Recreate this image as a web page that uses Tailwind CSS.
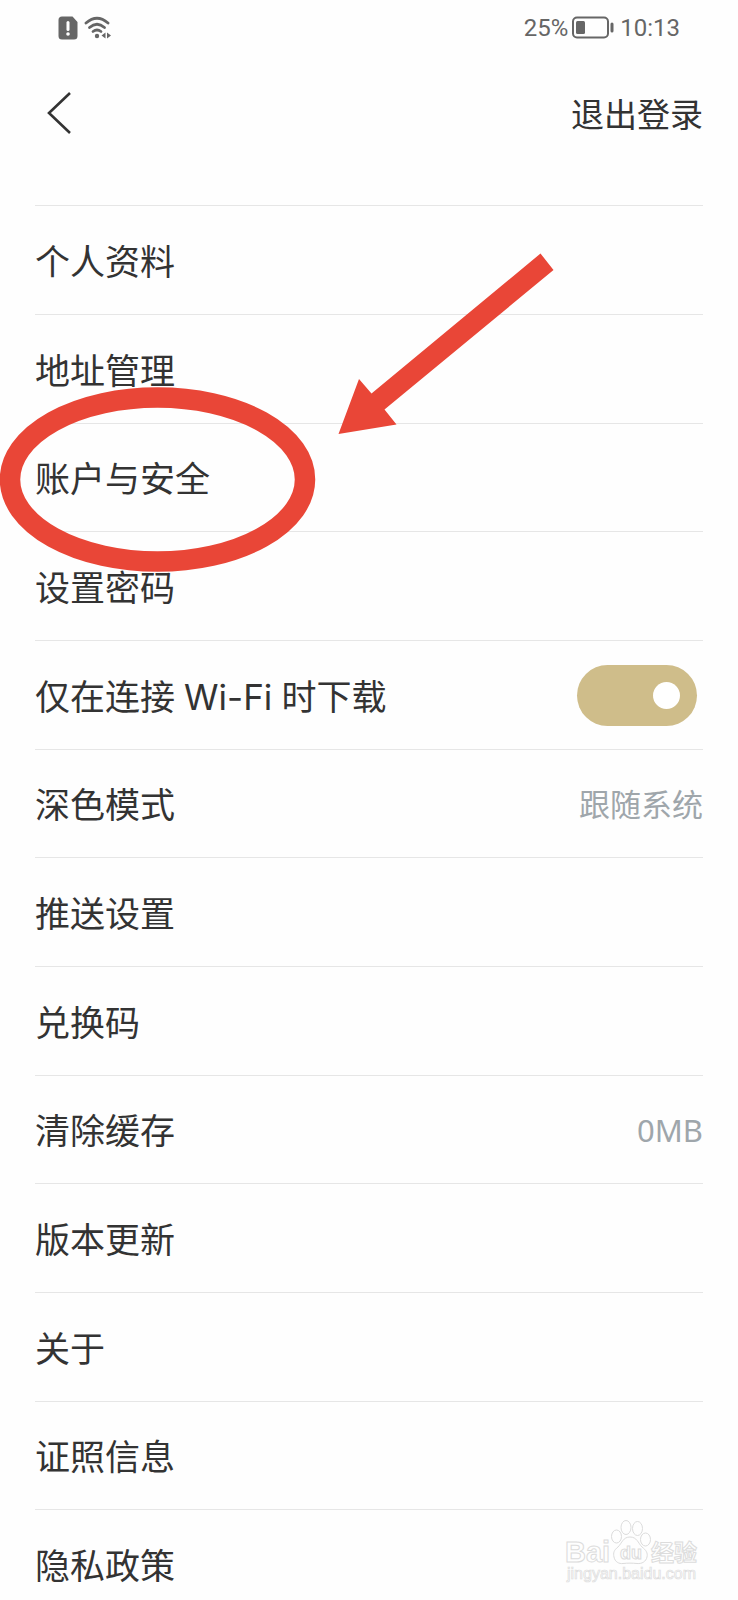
<!DOCTYPE html>
<html lang="zh-CN">
<head>
<meta charset="utf-8">
<meta name="viewport" content="width=device-width, initial-scale=1">
<title>设置</title>
<script src="https://cdn.jsdelivr.net/npm/@tailwindcss/browser@4"></script>
</head>
<body class="bg-[#fefefe]">
<div class="relative h-screen overflow-hidden text-[#333333] font-['Noto_Sans','Noto_Sans_CJK_SC',sans-serif]">

  <!-- Status bar -->
  <div class="flex h-14 items-center justify-between px-[58px] text-[#666666]">
    <div class="flex items-center gap-1.5">
      <svg class="h-6 w-5" viewBox="0 0 20 24" aria-hidden="true">
        <path d="M4 .5h10.500l5 5.500V20a3.500 3.500 0 0 1-3.500 3.500H4A3.500 3.500 0 0 1 .5 20V4A3.500 3.500 0 0 1 4 .5z" fill="#666666"/>
        <path d="M10 6.500v7" stroke="#fff" stroke-width="3" stroke-linecap="round"/>
        <circle cx="10" cy="18" r="1.800" fill="#fff"/>
      </svg>
      <svg class="h-6 w-7" viewBox="0 0 28 24" fill="none" stroke="#666666" stroke-width="2.800" stroke-linecap="round" aria-hidden="true">
        <path d="M2 7Q13 -2.500 24 7"/>
        <path d="M5.500 11.500Q13 5 20.500 11.500"/>
        <path d="M9 15.500Q13 12.500 17 15.500"/>
        <circle cx="13" cy="20" r="2.200" fill="#666666" stroke="none"/>
        <path d="M21.500 16.500v6L17.500 19.500zM23 16.500v6L27 19.500z" fill="#666666" stroke="none"/>
      </svg>
    </div>
    <div class="flex items-center font-[Roboto,sans-serif] text-2xl">
      <span>25%</span>
      <svg class="mx-1 h-6 w-[42px]" viewBox="0 0 42 24" aria-hidden="true">
        <rect x="1" y="1.500" width="35" height="20" rx="4" fill="none" stroke="#666666" stroke-width="2"/>
        <rect x="4" y="5" width="9" height="13" rx="1.500" fill="#666666"/>
        <rect x="38.500" y="6.500" width="3" height="10" rx="1.500" fill="#666666"/>
      </svg>
      <span class="pl-0.5">10:13</span>
    </div>
  </div>

  <header class="flex h-[149px] items-start justify-between px-[35px] pt-8">
    <button type="button" aria-label="返回" class="flex h-12 w-12 items-center pl-3">
      <svg class="h-11 w-6" viewBox="0 0 24 44" fill="none" stroke="#333333" stroke-width="2.600" aria-hidden="true">
        <path d="M23 3L2 23l21 20"/>
      </svg>
    </button>
    <button type="button" class="text-[33px] leading-[54px]">退出登录</button>
  </header>

  <ul class="px-[35px] text-[35px] [&>li]:flex [&>li]:h-[109px] [&>li:nth-child(3n)]:h-[108px] [&>li]:items-center [&>li]:justify-between [&>li]:border-t [&>li]:border-[#e6e6e6] [&_a]:pt-1 [&_label]:pt-1 [&_span]:pt-0.5">
    <li><a href="#profile">个人资料</a></li>
    <li><a href="#address">地址管理</a></li>
    <li><a href="#security">账户与安全</a></li>
    <li><a href="#password">设置密码</a></li>
    <li>
      <label for="wifi">仅在连接 <b class="font-[Inter,sans-serif] font-normal">Wi-Fi</b> 时下载</label>
      <input id="wifi" type="checkbox" role="switch" checked class="mr-[6px] flex h-[61px] w-[120px] shrink-0 appearance-none items-center rounded-full bg-[#cfbd8a] px-[17px] before:h-[27px] before:w-[27px] before:rounded-full before:bg-white checked:justify-end">
    </li>
    <li><a href="#dark">深色模式</a><span class="text-[31px] text-[#9fa6ab]">跟随系统</span></li>
    <li><a href="#push">推送设置</a></li>
    <li><a href="#redeem">兑换码</a></li>
    <li><a href="#cache">清除缓存</a><span class="text-[31px] text-[#9fa6ab]">0MB</span></li>
    <li><a href="#update">版本更新</a></li>
    <li><a href="#about">关于</a></li>
    <li><a href="#license">证照信息</a></li>
    <li><a href="#privacy">隐私政策</a></li>
  </ul>

  <!-- Hand-placed annotation: ring and arrow -->
  <svg class="pointer-events-none absolute left-0 top-0 h-[600px] w-[600px]" viewBox="0 0 600 600" aria-hidden="true">
    <ellipse cx="157.500" cy="479.500" rx="147.500" ry="82" fill="none" stroke="#e94637" stroke-width="20.500"/>
    <path d="M540.500 253.500L553.500 270 384.500 409.500 396.500 424.500 338.500 434 359 379 371.500 393.500z" fill="#e94637"/>
  </svg>

  <!-- Watermark -->
  <svg class="pointer-events-none absolute bottom-0 right-[34px] h-[84px] w-[140px] font-['Liberation_Sans','Noto_Sans_CJK_SC',sans-serif]" viewBox="0 0 140 84" fill="#fefefe" stroke="#dcdcdc" stroke-width="1">
    <text x="1" y="46" font-size="29" font-weight="700">Bai</text>
    <ellipse cx="52.500" cy="20.500" rx="5" ry="6.500"/>
    <ellipse cx="62" cy="11.500" rx="5" ry="7"/>
    <ellipse cx="73.500" cy="12.500" rx="5" ry="7"/>
    <ellipse cx="81.500" cy="23.500" rx="5" ry="6.500"/>
    <path d="M66 21c-7 0-8 6-12 10-4 3-5 6-4 10 1 5 5 7 9 6.500 5-.5 9-.5 14 0 5 .5 9-2 10-6.500 1-4-1-7-5-10-4-4-5-10-12-10z"/>
    <text x="56" y="43" font-size="18" font-weight="700">du</text>
    <text x="87" y="45" font-size="23" font-weight="700">经验</text>
    <text x="3" y="63" font-size="16" stroke-width="0.700">jingyan.baidu.com</text>
  </svg>
</div>
</body>
</html>
